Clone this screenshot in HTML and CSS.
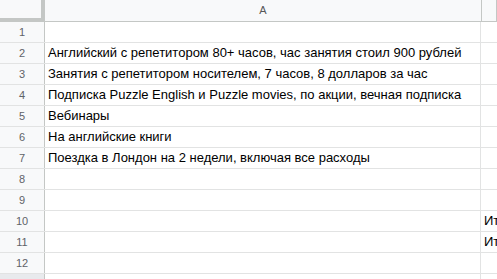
FILE: index.html
```html
<!DOCTYPE html>
<html lang="ru">
<head>
    <meta charset="UTF-8">
    <title>Таблица</title>
    <link rel="stylesheet" href="styles.css">
</head>
<body>
    <div class="sheet">
        <div class="head-row">
            <div class="corner"></div>
            <div class="col-head col-a">A</div>
            <div class="col-head col-b"></div>
        </div>
        <div class="row"><div class="num">1</div><div class="cell col-a"></div><div class="cell col-b"></div></div>
        <div class="row"><div class="num">2</div><div class="cell col-a">Английский с репетитором 80+ часов, час занятия стоил 900 рублей</div><div class="cell col-b"></div></div>
        <div class="row"><div class="num">3</div><div class="cell col-a">Занятия с репетитором носителем, 7 часов, 8 долларов за час</div><div class="cell col-b"></div></div>
        <div class="row"><div class="num">4</div><div class="cell col-a">Подписка Puzzle English и Puzzle movies, по акции, вечная подписка</div><div class="cell col-b"></div></div>
        <div class="row"><div class="num">5</div><div class="cell col-a">Вебинары</div><div class="cell col-b"></div></div>
        <div class="row"><div class="num">6</div><div class="cell col-a">На английские книги</div><div class="cell col-b"></div></div>
        <div class="row"><div class="num">7</div><div class="cell col-a">Поездка в Лондон на 2 недели, включая все расходы</div><div class="cell col-b"></div></div>
        <div class="row"><div class="num">8</div><div class="cell col-a"></div><div class="cell col-b"></div></div>
        <div class="row"><div class="num">9</div><div class="cell col-a"></div><div class="cell col-b"></div></div>
        <div class="row"><div class="num">10</div><div class="cell col-a"></div><div class="cell col-b">Итого</div></div>
        <div class="row"><div class="num">11</div><div class="cell col-a"></div><div class="cell col-b">Итого</div></div>
        <div class="row"><div class="num">12</div><div class="cell col-a"></div><div class="cell col-b"></div></div>
        <div class="row"><div class="num next"></div><div class="cell col-a"></div><div class="cell col-b"></div></div>
    </div>
</body>
</html>
```
FILE: styles.css
```css
body {
    margin: 0;
    background: #ffffff;
    font-family: "Liberation Sans", Arial, sans-serif;
    overflow: hidden;
}
.sheet {
    width: 497px;
    height: 279px;
    overflow: hidden;
}
.head-row, .row {
    display: flex;
    white-space: nowrap;
}
.head-row {
    height: 21px;
    background: #f8f9fa;
    border-bottom: 1px solid #c4c7c5;
}
.corner {
    width: 41px;
    flex: none;
    height: 18px;
    border-right: 4px solid #c4c7c5;
    border-bottom: 3px solid #c4c7c5;
}
.col-head {
    color: #575757;
    font-size: 11px;
    line-height: 21px;
    text-align: center;
    border-right: 1px solid #c4c7c5;
}
.col-a {
    width: 436px;
    flex: none;
}
.col-b {
    flex: 1;
}
.row {
    height: 20px;
    border-bottom: 1px solid #e2e3e3;
}
.num {
    width: 44px;
    flex: none;
    background: #f8f9fa;
    border-right: 1px solid #c4c7c5;
    color: #5f6368;
    font-size: 11px;
    line-height: 20px;
    text-align: center;
}
.num.next {
    background: #e8eaed;
}
.cell {
    color: #000000;
    font-size: 13px;
    line-height: 20px;
    padding: 0 3px;
    box-sizing: border-box;
    overflow: hidden;
}
.cell.col-a {
    border-right: 1px solid #e2e3e3;
}
.row .num {
    border-bottom: 0;
}
```
